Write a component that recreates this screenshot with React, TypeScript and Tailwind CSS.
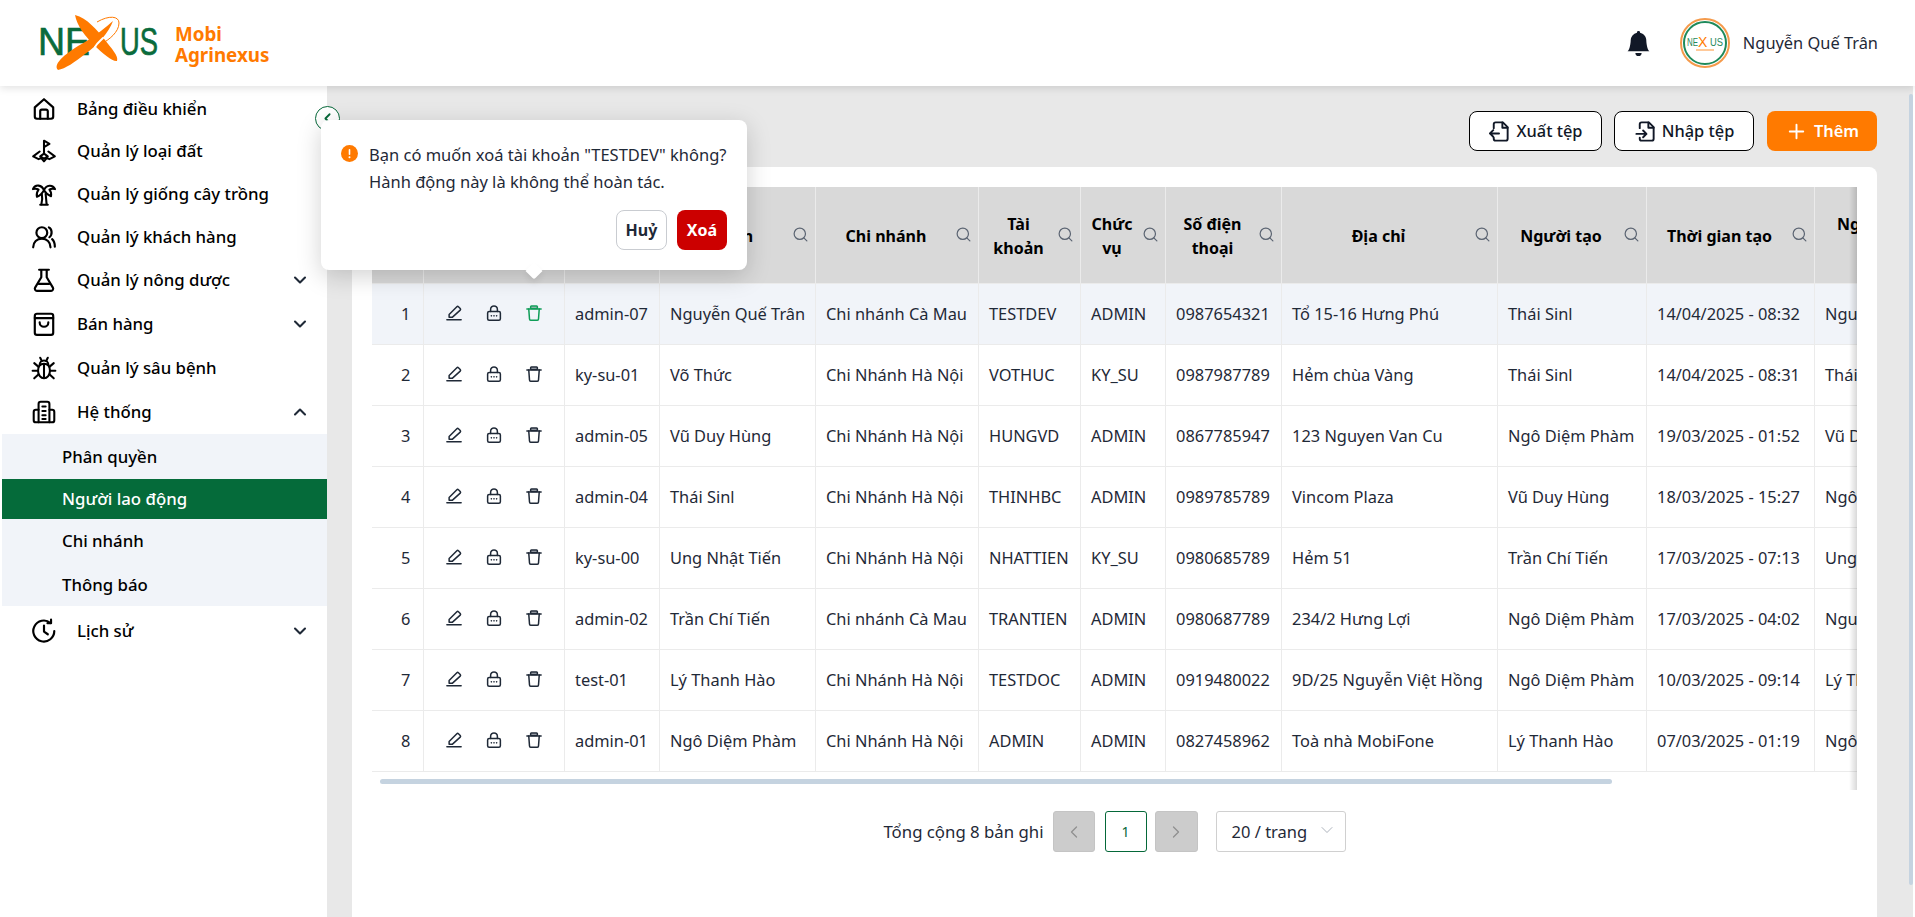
import React from "react";
import { ChevronDown, ChevronLeft, ChevronRight, ChevronUp, Plus, Search } from "lucide-react";
import { BsBellFill } from "react-icons/bs";

const IconSvg = ({ children, size = 26, stroke = 2, className = "" }: { children: React.ReactNode; size?: number; stroke?: number; className?: string }) => (
	<svg width={size} height={size} viewBox="0 0 24 24" fill="none" stroke="currentColor" strokeWidth={stroke} strokeLinecap="round" strokeLinejoin="round" className={className}>
		{children}
	</svg>
);

const HomeIcon = () => (
	<IconSvg>
		<path d="M3.5 10.5 12 3l8.5 7.5V19a2 2 0 0 1-2 2h-13a2 2 0 0 1-2-2Z" />
		<path d="M8.5 21v-7a1.5 1.5 0 0 1 1.5-1.5h4a1.5 1.5 0 0 1 1.5 1.5v7" />
	</IconSvg>
);
const LandIcon = () => (
	<IconSvg stroke={1.9}>
		<path d="M12 14V2.5l5 3-5 3" />
		<path d="M8 12.5 2 17l5 2.5 2.5-1 2.5 3 2.5-3 2.5 1L22 17l-6-4.5" />
		<path d="M12 14.5 8.5 17l3.5 2 3.5-2Z" />
	</IconSvg>
);
const PalmIcon = () => (
	<IconSvg stroke={1.9}>
		<path d="M12 8.5C10 3.5 4 2.5 1.800 7.500c2-.5 3.700-.5 5.200.5-1.500 1.800-2 4-1.500 6.500 2.800-1 5-3.500 6.500-6Z" />
		<path d="M12 8.500c2-5 8-5.500 10.200-1-2-.5-3.700-.5-5.200.5 1.500 1.800 1.800 4 1.500 6-2.800-1-5-3-6.500-5.500Z" />
		<path d="M9.500 22c1-3.500 1.200-6.500.5-10M14.500 22c-.5-3.500-.5-6.500-1-10M8.500 22h7" />
	</IconSvg>
);
const UsersIcon = () => (
	<IconSvg>
		<circle cx="10" cy="8" r="5" />
		<path d="M2 21.500c0-5 3.500-8 8-8s8 3 8 8" />
		<path d="M16.500 3.200c3 1.200 3.500 6.500.5 9" />
		<path d="M19.500 14c1.800 1.500 2.500 4 2.500 7" />
	</IconSvg>
);
const FlaskIcon = () => (
	<IconSvg>
		<path d="M7.500 2.500h9M9.500 2.500v7L3.800 19a2 2 0 0 0 1.700 3h13a2 2 0 0 0 1.700-3l-5.700-9.500v-7" />
		<path d="M7 15.500h10" />
	</IconSvg>
);
const BagIcon = () => (
	<IconSvg>
		<path d="M5.500 2.500h13a2 2 0 0 1 2 2V20a2 2 0 0 1-2 2h-13a2 2 0 0 1-2-2V4.500a2 2 0 0 1 2-2Z" />
		<path d="M3.500 6.500h17" />
		<path d="M8 10.500a4 4 0 0 0 8 0" />
	</IconSvg>
);
const BugIcon = () => (
	<IconSvg stroke={1.9}>
		<path d="M12 8c-3.500 0-5.500 2.500-5.500 6.500S9 21.500 12 21.500s5.500-3 5.500-7S15.500 8 12 8Z" />
		<path d="M12 9v12M8 9a4 4 0 0 1 8 0" />
		<path d="M8.500 2.500 10 5.500M15.500 2.500 14 5.500M6.500 10.500 3 7.500M17.500 10.500l3.500-3M6 14.500H1.500M18 14.500h4.500M6.800 18 3 21.500M17.200 18l3.800 3.500" />
	</IconSvg>
);
const BuildingIcon = () => (
	<IconSvg stroke={1.9}>
		<path d="M7 21.500V4.500a2 2 0 0 1 2-2h6a2 2 0 0 1 2 2v17" />
		<path d="M7 10H4.500a2 2 0 0 0-2 2v7.500a2 2 0 0 0 2 2h15a2 2 0 0 0 2-2V12a2 2 0 0 0-2-2H17" />
		<path d="M10.500 7h3M10.500 11h3M10.500 15h3M10.500 18.500h3" />
	</IconSvg>
);
const ClockIcon = () => (
	<IconSvg>
		<path d="M21.500 12A9.700 9.700 0 1 1 18 4.600" />
		<path d="M18.500 1.500v3.300h-3.300" />
		<path d="M12 7v5.500l3.500 2.500" />
	</IconSvg>
);

const PencilIcon = () => (
	<IconSvg size={18} stroke={2}>
		<path d="M2.500 21h19" />
		<path d="M5.500 17.500V14L15.800 3.700a1.500 1.500 0 0 1 2.100 0l2.400 2.400a1.500 1.500 0 0 1 0 2.100L10 17.500Z" />
	</IconSvg>
);
const LockIcon = () => (
	<IconSvg size={18} stroke={2}>
		<rect x="3.500" y="10" width="17" height="11.500" rx="2" />
		<path d="M7.500 10V7a4.500 4.500 0 0 1 9 0v3" />
		<path d="M8.500 15.800h.01M12 15.800h.01M15.500 15.800h.01" strokeWidth={2.200} />
	</IconSvg>
);
const TrashIcon = () => (
	<IconSvg size={18} stroke={2}>
		<rect x="7.500" y="2.500" width="9" height="3.500" rx="1" fill="#b8bcc4" />
		<path d="M2.500 6.500h19" />
		<path d="m5 6.500 1 13.500a1.500 1.500 0 0 0 1.500 1.500h9A1.500 1.500 0 0 0 18 20l1-13.500" />
	</IconSvg>
);

const ExportIcon = () => (
	<IconSvg size={23}>
		<path d="M6 8.500V4.500a2 2 0 0 1 2-2h7.500l5 5V19.500a2 2 0 0 1-2 2H8a2 2 0 0 1-2-2v-1" />
		<path d="M15 2.500V8h5.500" />
		<path d="M2 14h9.500M5.500 10.500 2 14l3.500 3.500" />
	</IconSvg>
);
const ImportIcon = () => (
	<IconSvg size={23}>
		<path d="M6 8.500V4.500a2 2 0 0 1 2-2h7.500l5 5V19.500a2 2 0 0 1-2 2H8a2 2 0 0 1-2-2v-1" />
		<path d="M15 2.500V8h5.500" />
		<path d="M2.500 14.500H13M9.500 11l3.500 3.500L9.500 18" />
	</IconSvg>
);

// logo mark, letters stay real text
const Logo = () => (
	<svg width="130" height="62" viewBox="0 0 130 62" className="shrink-0">
		<g fill="#0a6b3c" stroke="#0a6b3c" strokeWidth="0.7" fontFamily="'Liberation Sans', sans-serif" fontSize="39">
			<text x="3" y="43" textLength="52" lengthAdjust="spacingAndGlyphs">NE</text>
			<text x="85" y="43" textLength="38" lengthAdjust="spacingAndGlyphs">US</text>
		</g>
		<path d="M23 58C17 52 32 40 50 30 62 23 72 14 78 9 74 20 62 34 50 42 40 50 30 57 23 58Z" fill="#ff7a00" />
		<path d="M40 3c12 3 22 15 30 25 6 8 14 16 12 21-4 1-14-7-22-15C50 24 42 14 40 3Z" fill="#ff7a00" />
		<path d="M62 10c12-7 22-6 22 1 0 9-10 17-18 21" fill="none" stroke="#ff7a00" strokeWidth="1" />
		<path d="M60 35c2-4 5-6 8-9" fill="none" stroke="#fff" strokeWidth="2" strokeLinecap="round" />
	</svg>
);

const Avatar = () => (
	<div className="w-[50px] h-[50px] rounded-full border-2 border-[#f59a4b] p-px shrink-0">
		<div className="w-full h-full rounded-full border-2 border-[#1f8a5b] bg-white flex items-center justify-center">
			<svg width="38" height="20" viewBox="0 0 38 20">
				<g fontFamily="'Liberation Sans', sans-serif" fontSize="10">
					<text x="1" y="13" fill="#1f8a5b" textLength="11" lengthAdjust="spacingAndGlyphs">NE</text>
					<text x="12" y="14" fill="#ff7a00" fontSize="14">X</text>
					<text x="24" y="13" fill="#1f8a5b" textLength="13" lengthAdjust="spacingAndGlyphs">US</text>
				</g>
				<path d="M10 17h18" stroke="#ff7a00" strokeWidth="0.8" />
			</svg>
		</div>
	</div>
);

const menu = [
	{ label: "Bảng điều khiển", icon: <HomeIcon />, h: "h-[42px]" },
	{ label: "Quản lý loại đất", icon: <LandIcon />, h: "h-[42px]" },
	{ label: "Quản lý giống cây trồng", icon: <PalmIcon />, h: "h-[43px]" },
	{ label: "Quản lý khách hàng", icon: <UsersIcon />, h: "h-[43px]" },
	{ label: "Quản lý nông dược", icon: <FlaskIcon />, h: "h-[44px]", arrow: "down" },
	{ label: "Bán hàng", icon: <BagIcon />, h: "h-[44px]", arrow: "down" },
	{ label: "Quản lý sâu bệnh", icon: <BugIcon />, h: "h-[44px]" },
	{ label: "Hệ thống", icon: <BuildingIcon />, h: "h-[44px]", arrow: "up" },
];

const subMenu = [
	{ label: "Phân quyền", h: "h-[45px]" },
	{ label: "Người lao động", h: "h-[40px]", active: true },
	{ label: "Chi nhánh", h: "h-[44px]" },
	{ label: "Thông báo", h: "h-[43px]" },
];

const MenuRow = ({ label, icon, h, arrow }: { label: string; icon: React.ReactNode; h: string; arrow?: string }) => (
	<div className={`${h} flex items-center pl-[31px] pr-[17px] text-[16.8px] font-medium text-black`}>
		<span className="w-[46px] shrink-0">{icon}</span>
		<span className="flex-1 whitespace-nowrap">{label}</span>
		{arrow === "down" && <ChevronDown size={20} strokeWidth={2.5} className="text-[#1f2937] mb-px" />}
		{arrow === "up" && <ChevronUp size={20} strokeWidth={2.5} className="text-[#1f2937]" />}
	</div>
);

const columns = [
	{ title: "STT", w: "w-[51px]" },
	{ title: "Thao tác", w: "w-[141px]" },
	{ title: "Mã", w: "w-[95px]", search: true },
	{ title: "Họ tên", w: "w-[156px]", search: true },
	{ title: "Chi nhánh", w: "w-[163px]", search: true },
	{ title: "Tài khoản", w: "w-[102px]", search: true },
	{ title: "Chức vụ", w: "w-[85px]", search: true },
	{ title: "Số điện thoại", w: "w-[116px]", search: true },
	{ title: "Địa chỉ", w: "w-[216px]", search: true },
	{ title: "Người tạo", w: "w-[149px]", search: true },
	{ title: "Thời gian tạo", w: "w-[168px]", search: true },
	{ title: "Người cập nhật", w: "w-[150px]", search: true },
];

const rows = [
	["admin-07", "Nguyễn Quế Trân", "Chi nhánh Cà Mau", "TESTDEV", "ADMIN", "0987654321", "Tổ 15-16 Hưng Phú", "Thái Sinl", "14/04/2025 - 08:32", "Nguyễn Quế Trân"],
	["ky-su-01", "Võ Thức", "Chi Nhánh Hà Nội", "VOTHUC", "KY_SU", "0987987789", "Hẻm chùa Vàng", "Thái Sinl", "14/04/2025 - 08:31", "Thái Sinl"],
	["admin-05", "Vũ Duy Hùng", "Chi Nhánh Hà Nội", "HUNGVD", "ADMIN", "0867785947", "123 Nguyen Van Cu", "Ngô Diệm Phàm", "19/03/2025 - 01:52", "Vũ Duy Hùng"],
	["admin-04", "Thái Sinl", "Chi Nhánh Hà Nội", "THINHBC", "ADMIN", "0989785789", "Vincom Plaza", "Vũ Duy Hùng", "18/03/2025 - 15:27", "Ngô Diệm Phàm"],
	["ky-su-00", "Ung Nhật Tiến", "Chi Nhánh Hà Nội", "NHATTIEN", "KY_SU", "0980685789", "Hẻm 51", "Trần Chí Tiến", "17/03/2025 - 07:13", "Ung Nhật Tiến"],
	["admin-02", "Trần Chí Tiến", "Chi nhánh Cà Mau", "TRANTIEN", "ADMIN", "0980687789", "234/2 Hưng Lợi", "Ngô Diệm Phàm", "17/03/2025 - 04:02", "Nguyễn Quế Trân"],
	["test-01", "Lý Thanh Hào", "Chi Nhánh Hà Nội", "TESTDOC", "ADMIN", "0919480022", "9D/25 Nguyễn Việt Hồng", "Ngô Diệm Phàm", "10/03/2025 - 09:14", "Lý Thanh Hào"],
	["admin-01", "Ngô Diệm Phàm", "Chi Nhánh Hà Nội", "ADMIN", "ADMIN", "0827458962", "Toà nhà MobiFone", "Lý Thanh Hào", "07/03/2025 - 01:19", "Ngô Diệm Phàm"],
];

const DataTable = () => (
	<div className="relative h-[603px] overflow-hidden">
		<table className="table-fixed w-[1592px] text-[16.4px] text-[#1f2937]">
			<colgroup>
				{columns.map((c) => (
					<col key={c.title} className={c.w} />
				))}
			</colgroup>
			<thead>
				<tr className="h-[96px] bg-[#d9d9d9]">
					{columns.map((c) => (
						<th key={c.title} className="border-r border-b border-[#ebebeb] p-0 text-[16px] font-bold text-black">
							<div className="flex items-center pl-2 pr-1.5 gap-1.5 pt-0.5">
								<span className="flex-1 text-center leading-[24px]">{c.title}</span>
								{c.search && <Search size={17} strokeWidth={1.7} className="shrink-0 text-[#5b6472] -mt-0.5" />}
							</div>
						</th>
					))}
				</tr>
			</thead>
			<tbody>
				{rows.map((row, i) => (
					<tr key={row[0]} className={`h-[61px] ${i === 0 ? "bg-[#f1f4f9]" : "bg-white"}`}>
						<td className="border-r border-b border-[#ebebeb] pr-3 pt-px text-right">{i + 1}</td>
						<td className="border-r border-b border-[#ebebeb] p-0">
							<div className="flex items-center justify-center gap-[22px] pb-0.5 text-[#1f2937]">
								<PencilIcon />
								<LockIcon />
								<span className={i === 0 ? "text-[#0f9d58]" : ""}>
									<TrashIcon />
								</span>
							</div>
						</td>
						{row.map((cell, j) => (
							<td key={j} className="border-r border-b border-[#ebebeb] pl-[10.500px] pr-0 pt-px whitespace-nowrap overflow-hidden">
								{cell}
							</td>
						))}
					</tr>
				))}
			</tbody>
		</table>
		<div className="absolute top-0 right-0 w-[8px] h-full bg-gradient-to-l from-black/15 to-transparent" />
		<div className="absolute left-[8px] top-[592px] w-[1232px] h-[5px] rounded-full bg-[#c5d3e0]" />
	</div>
);

const Pagination = () => (
	<div className="flex items-center justify-center mt-[21px] text-[16.8px] text-[#1f2937]">
		<span className="mr-[9px] whitespace-nowrap">Tổng cộng 8 bản ghi</span>
		<div className="w-[42px] h-[41px] rounded-[3px] border border-[#c4c4c4] bg-[#cccccc] flex items-center justify-center text-[#8f8f8f]">
			<ChevronLeft size={20} strokeWidth={1.5} />
		</div>
		<div className="w-[42px] h-[41px] ml-[10px] rounded-[3px] border border-[#056839] bg-white flex items-center justify-center text-[14px] text-[#056839]">1</div>
		<div className="w-[43px] h-[41px] ml-[8px] rounded-[3px] border border-[#c4c4c4] bg-[#cccccc] flex items-center justify-center text-[#8f8f8f]">
			<ChevronRight size={20} strokeWidth={1.5} />
		</div>
		<div className="w-[130px] h-[41px] ml-[18px] rounded-[3px] border border-[#d0d0d0] flex items-center justify-between pl-[15px] pr-[8px] text-[16.5px]">
			<span className="whitespace-nowrap pt-px">20 / trang</span>
			<ChevronDown size={20} strokeWidth={1} className="text-[#9ca3af] mb-1" />
		</div>
	</div>
);

const DeletePopover = () => (
	<div className="absolute left-[321px] top-[120px] w-[426px] h-[150px] rounded-lg bg-white shadow-[0_6px_24px_rgba(0,0,0,0.18)] z-30 text-[16.5px] text-[#1f2937]">
		<div className="flex pl-[20px] pr-[20px] pt-[22px]">
			<svg width="17" height="17" viewBox="0 0 17 17" className="shrink-0 mt-[3px]">
				<circle cx="8.500" cy="8.500" r="8.500" fill="#ff7a00" />
				<rect x="7.700" y="4" width="1.600" height="6" rx="0.800" fill="#fff" />
				<circle cx="8.500" cy="12.200" r="1" fill="#fff" />
			</svg>
			<p className="ml-[11px] leading-[26.500px] whitespace-nowrap">
				Bạn có muốn xoá tài khoản "TESTDEV" không?
				<br />
				Hành động này là không thể hoàn tác.
			</p>
		</div>
		<div className="flex justify-end gap-[10px] pr-[20px] mt-[15px] text-[16px]">
			<button className="w-[51px] h-[40px] rounded-lg border border-[#c9ccd1] bg-white font-bold text-[#1f2937]">Huỷ</button>
			<button className="w-[50px] h-[40px] rounded-lg bg-[#cc0000] font-bold text-white">Xoá</button>
		</div>
		<div className="absolute left-[207px] top-[145px] w-[12px] h-[12px] rotate-45 bg-white rounded-br-[2px] shadow-[3px_3px_6px_rgba(0,0,0,0.08)]" />
	</div>
);

const App = () => {
	return (
		<div className="relative w-full h-[917px] overflow-hidden bg-white [font-family:'Noto_Sans',sans-serif]">
			<header className="relative z-10 h-[86px] bg-white flex items-center shadow-[0_2px_8px_rgba(0,0,0,0.12)] pl-[35px] pr-[37px]">
				<Logo />
				<div className="ml-[10px] mt-[4px] text-[18.800px] leading-[21px] font-bold text-[#ff7a00]">
					<div>Mobi</div>
					<div>Agrinexus</div>
				</div>
				<div className="ml-auto flex items-center">
					<BsBellFill size={25} className="text-[#111827]" />
					<div className="ml-[29px]">
						<Avatar />
					</div>
					<span className="ml-[13px] text-[16.4px] text-[#1f2937] whitespace-nowrap">Nguyễn Quế Trân</span>
				</div>
			</header>

			<div className="flex h-[831px] pr-[2px]">
				<aside className="w-[327px] shrink-0 pt-[2px] bg-white">
					{menu.map((m) => (
						<MenuRow key={m.label} {...m} />
					))}
					<div className="ml-[2px] bg-[#f1f4f9] text-[16.8px] font-medium text-black">
						{subMenu.map((s) => (
							<div key={s.label} className={`${s.h} flex items-center pl-[60px] ${s.active ? "bg-[#056b3a] text-white" : ""}`}>
								{s.label}
							</div>
						))}
					</div>
					<MenuRow label="Lịch sử" icon={<ClockIcon />} h="h-[50px]" arrow="down" />
				</aside>

				<main className="relative flex-1 min-w-0 bg-[#e8e8e8] pl-[25px] pr-[36px] pt-[25px]">
					<div className="flex items-center h-[40px]">
						<h1 className="h-[40px] text-[34px] leading-[45px] font-bold text-[#056839] whitespace-nowrap">Người lao động</h1>
						<div className="ml-auto flex items-center text-[16.4px] font-medium text-[#111827]">
							<button className="h-[40px] w-[133px] rounded-lg border border-black bg-white flex items-center justify-center gap-[5px]">
								<ExportIcon />
								<span className="pt-px">Xuất tệp</span>
							</button>
							<button className="h-[40px] w-[140px] ml-[12px] rounded-lg border border-black bg-white flex items-center justify-center gap-[5px]">
								<ImportIcon />
								<span className="pt-px">Nhập tệp</span>
							</button>
							<button className="h-[40px] w-[110px] ml-[13px] rounded-lg bg-[#ff7a00] text-white font-semibold flex items-center justify-center gap-[6px]">
								<Plus size={23} strokeWidth={2} />
								<span className="pt-px">Thêm</span>
							</button>
						</div>
					</div>
					<div className="mt-[16px] h-[800px] rounded-lg bg-white p-[20px]">
						<DataTable />
						<Pagination />
					</div>
					<div className="absolute right-0 top-[8px] bottom-[32px] w-[4px] rounded-full bg-[#c5d3e0]" />
				</main>
			</div>

			{/* collapse toggle sits half on the sidebar */}
			<div className="absolute left-[315px] top-[106px] z-20 w-[25px] h-[25px] rounded-full border border-[#056839] bg-white flex items-center justify-center text-[#056839]">
				<ChevronLeft size={17} strokeWidth={2.5} />
			</div>
			<DeletePopover />
		</div>
	);
};

export default App;
